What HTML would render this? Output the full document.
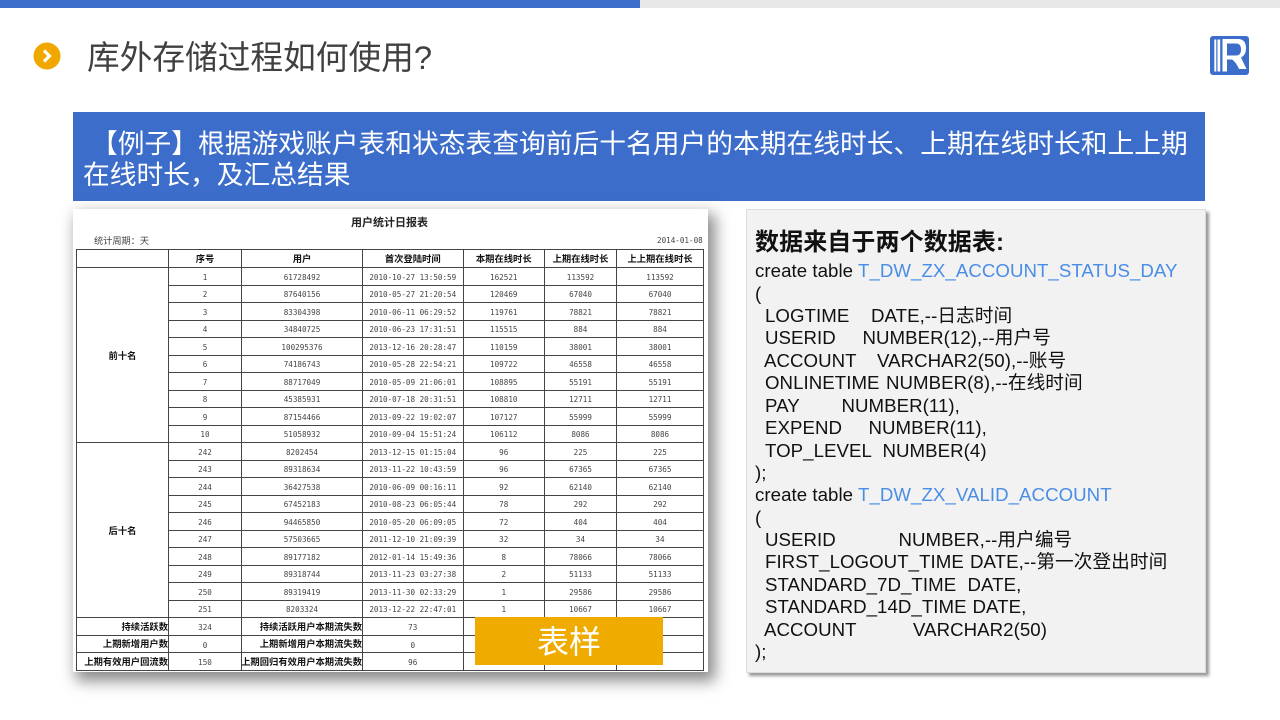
<!DOCTYPE html>
<html lang="zh"><head><meta charset="utf-8"><title>库外存储过程如何使用?</title>
<style>
html,body{margin:0;padding:0;width:1280px;height:720px;overflow:hidden;background:#fff}
body{position:relative;font-family:"Liberation Sans","Noto Sans CJK SC",sans-serif}
.a{position:absolute}
#title{left:87px;top:35px;font-size:32.7px;line-height:46px;color:#404040;white-space:nowrap}
#ban{left:73px;top:112px;width:1132px;height:89px;background:#3c6dca;color:#fff;font-size:26.75px;line-height:31px;font-family:"Noto Sans CJK SC",sans-serif}
#ban div{position:absolute;white-space:nowrap;line-height:31px}
#paper{left:73px;top:209px;width:635px;height:463px;background:#fff;box-shadow:5px 7px 14px 2px rgba(60,60,60,.6)}
#grid{left:76px;top:249px;display:grid;grid-template-columns:92px 73px 121px 100.5px 81.5px 72px 87px;grid-template-rows:18px repeat(20,17.5px) repeat(3,17.6px);border-top:1px solid #444;border-left:1px solid #444;filter:blur(.25px);box-sizing:content-box}
#grid span{border-right:1px solid #444;border-bottom:1px solid #444;display:flex;align-items:center;justify-content:center;font:7.6px/1 "DejaVu Sans Mono","Liberation Mono",monospace;color:#444;box-sizing:border-box;overflow:hidden;white-space:nowrap;margin:0;padding-top:3px}
#grid span.h{font:700 9.3px/1 "Noto Sans CJK SC",sans-serif;color:#111;padding-top:1px}
#grid span.r{font:700 9.3px/1 "Noto Sans CJK SC",sans-serif;color:#111;justify-content:flex-end;padding-top:0}
#badge{left:475px;top:617px;width:188px;height:48px;background:#f0ab00;color:#fff;font-size:32px;line-height:50px;text-align:center}
#panel{left:746px;top:209px;width:460px;height:464px;background:#f2f2f2;border:1px solid #ddd;box-sizing:border-box;box-shadow:3px 3px 3px rgba(80,80,80,.6)}
.l{position:absolute;left:755px;height:22px;line-height:22px;font-size:18.67px;color:#111;white-space:nowrap;letter-spacing:.05px}
.l b{font-weight:400;position:absolute;top:0;white-space:nowrap}
.l i{font-style:normal;color:#4a8de6}
</style></head><body>
<div class="a" style="left:0;top:0;width:640px;height:8px;background:#3c6dca"></div>
<div class="a" style="left:640px;top:0;width:640px;height:8px;background:#e8e8e8"></div>
<svg class="a" style="left:33px;top:42px" width="28" height="28" viewBox="0 0 28 28"><circle cx="14" cy="14" r="13.5" fill="#f0a800"/><path d="M11 8.500 L16.500 14 L11 19.500" fill="none" stroke="#fff" stroke-width="3.2"/></svg>
<div id="title" class="a">库外存储过程如何使用?</div>
<svg class="a" style="left:1210px;top:36px;filter:blur(.3px)" width="39" height="39" viewBox="0 0 39 39"><rect width="39" height="39" rx="3" fill="#3c6dca"/><path fill="#fff" d="M4.300 3.500h2v32h-2zM7.500 3.500h2.700v32h-2.700z"/><path fill="#fff" fill-rule="evenodd" d="M12.500 3H28Q36 3 36 12.500Q36 19 31 21.500L36.500 33H29Q26 26 22 23.500H17V35.500H12.500ZM17 7.500H26Q31 7.500 31 13.500Q31 19.500 26 19.500H17Z"/></svg>

<div id="ban" class="a"><div style="left:18px;top:14px">【例子】根据游戏账户表和状态表查询前后十名用户的本期在线时长、上期在线时长和上上期</div><div style="left:10px;top:45px">在线时长&#65292;及汇总结果</div></div>

<div id="paper" class="a"></div>
<div class="a" style="left:72px;width:635px;top:215px;text-align:center;font:700 11px/14px 'Noto Sans CJK SC',sans-serif;color:#222;filter:blur(.2px)">用户统计日报表</div>
<div class="a" style="left:94px;top:234px;font:9.2px/13px 'Noto Sans CJK SC',sans-serif;color:#444;filter:blur(.2px)">统计周期&#65306;天</div>
<div class="a" style="left:657px;top:234px;font:7.6px/13px 'DejaVu Sans Mono','Liberation Mono',monospace;color:#444;filter:blur(.2px)">2014-01-08</div>
<div id="grid" class="a">
<span></span><span class="h">序号</span><span class="h">用户</span><span class="h">首次登陆时间</span><span class="h">本期在线时长</span><span class="h">上期在线时长</span><span class="h">上上期在线时长</span>
<span class="h" style="grid-row:span 10">前十名</span><span>1</span><span>61728492</span><span>2010-10-27 13:50:59</span><span>162521</span><span>113592</span><span>113592</span>
<span>2</span><span>87640156</span><span>2010-05-27 21:20:54</span><span>120469</span><span>67040</span><span>67040</span>
<span>3</span><span>83304398</span><span>2010-06-11 06:29:52</span><span>119761</span><span>78821</span><span>78821</span>
<span>4</span><span>34840725</span><span>2010-06-23 17:31:51</span><span>115515</span><span>884</span><span>884</span>
<span>5</span><span>100295376</span><span>2013-12-16 20:28:47</span><span>110159</span><span>38001</span><span>38001</span>
<span>6</span><span>74186743</span><span>2010-05-28 22:54:21</span><span>109722</span><span>46558</span><span>46558</span>
<span>7</span><span>88717049</span><span>2010-05-09 21:06:01</span><span>108895</span><span>55191</span><span>55191</span>
<span>8</span><span>45385931</span><span>2010-07-18 20:31:51</span><span>108810</span><span>12711</span><span>12711</span>
<span>9</span><span>87154466</span><span>2013-09-22 19:02:07</span><span>107127</span><span>55999</span><span>55999</span>
<span>10</span><span>51058932</span><span>2010-09-04 15:51:24</span><span>106112</span><span>8086</span><span>8086</span>
<span class="h" style="grid-row:span 10">后十名</span><span>242</span><span>8202454</span><span>2013-12-15 01:15:04</span><span>96</span><span>225</span><span>225</span>
<span>243</span><span>89318634</span><span>2013-11-22 10:43:59</span><span>96</span><span>67365</span><span>67365</span>
<span>244</span><span>36427538</span><span>2010-06-09 00:16:11</span><span>92</span><span>62140</span><span>62140</span>
<span>245</span><span>67452183</span><span>2010-08-23 06:05:44</span><span>78</span><span>292</span><span>292</span>
<span>246</span><span>94465850</span><span>2010-05-20 06:09:05</span><span>72</span><span>404</span><span>404</span>
<span>247</span><span>57503665</span><span>2011-12-10 21:09:39</span><span>32</span><span>34</span><span>34</span>
<span>248</span><span>89177182</span><span>2012-01-14 15:49:36</span><span>8</span><span>78066</span><span>78066</span>
<span>249</span><span>89318744</span><span>2013-11-23 03:27:38</span><span>2</span><span>51133</span><span>51133</span>
<span>250</span><span>89319419</span><span>2013-11-30 02:33:29</span><span>1</span><span>29586</span><span>29586</span>
<span>251</span><span>8203324</span><span>2013-12-22 22:47:01</span><span>1</span><span>10667</span><span>10667</span>
<span class="r">持续活跃数</span><span>324</span><span class="r">持续活跃用户本期流失数</span><span>73</span><span></span><span></span><span></span>
<span class="r">上期新增用户数</span><span>0</span><span class="r">上期新增用户本期流失数</span><span>0</span><span></span><span></span><span></span>
<span class="r">上期有效用户回流数</span><span>150</span><span class="r">上期回归有效用户本期流失数</span><span>96</span><span></span><span></span><span></span>
</div>
<div id="badge" class="a">表样</div>

<div id="panel" class="a"></div>
<div class="a" style="left:755px;top:226px;font-size:24px;line-height:34px;font-weight:700;color:#111;white-space:nowrap;letter-spacing:.1px">数据来自于两个数据表:</div>
<div class="l" style="top:260px">create table <i>T_DW_ZX_ACCOUNT_STATUS_DAY</i></div>
<div class="l" style="top:283px">(</div>
<div class="l" style="top:305px"><b style="left:10px">LOGTIME</b><b style="left:116px">DATE,--日志时间</b></div>
<div class="l" style="top:327px"><b style="left:10px">USERID</b><b style="left:107.500px">NUMBER(12),--用户号</b></div>
<div class="l" style="top:350px"><b style="left:9px">ACCOUNT</b><b style="left:122px">VARCHAR2(50),--账号</b></div>
<div class="l" style="top:372px"><b style="left:10px">ONLINETIME</b><b style="left:131px">NUMBER(8),--在线时间</b></div>
<div class="l" style="top:395px"><b style="left:10px">PAY</b><b style="left:86.500px">NUMBER(11),</b></div>
<div class="l" style="top:417px"><b style="left:10px">EXPEND</b><b style="left:113.500px">NUMBER(11),</b></div>
<div class="l" style="top:440px"><b style="left:10px">TOP_LEVEL</b><b style="left:127.500px">NUMBER(4)</b></div>
<div class="l" style="top:462px">);</div>
<div class="l" style="top:484px">create table <i>T_DW_ZX_VALID_ACCOUNT</i></div>
<div class="l" style="top:507px">(</div>
<div class="l" style="top:529px"><b style="left:10px">USERID</b><b style="left:143.500px">NUMBER,--用户编号</b></div>
<div class="l" style="top:551px"><b style="left:10px">FIRST_LOGOUT_TIME</b><b style="left:215px">DATE,--第一次登出时间</b></div>
<div class="l" style="top:574px"><b style="left:10px">STANDARD_7D_TIME</b><b style="left:212.500px">DATE,</b></div>
<div class="l" style="top:596px"><b style="left:10px">STANDARD_14D_TIME</b><b style="left:217.500px">DATE,</b></div>
<div class="l" style="top:619px"><b style="left:9px">ACCOUNT</b><b style="left:158px">VARCHAR2(50)</b></div>
<div class="l" style="top:641px">);</div>
</body></html>
